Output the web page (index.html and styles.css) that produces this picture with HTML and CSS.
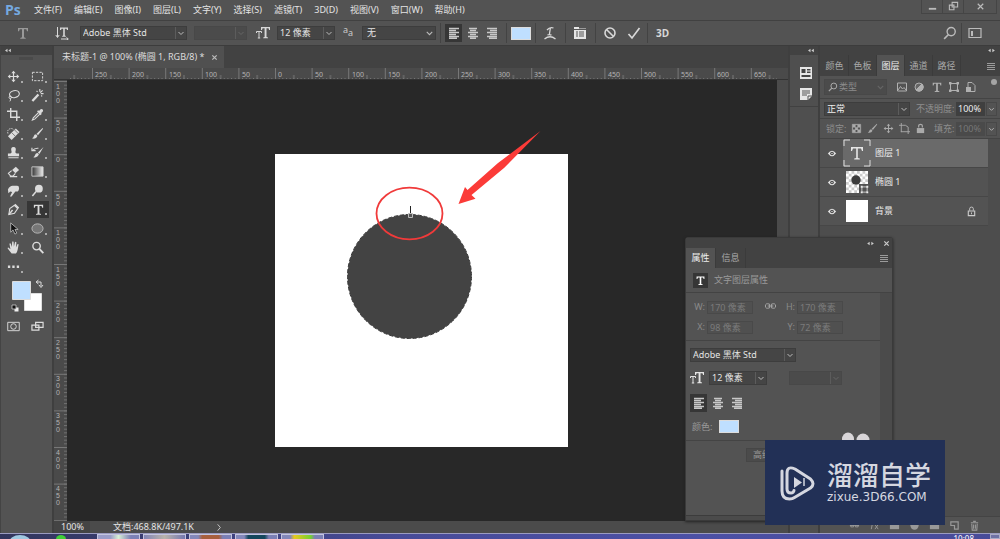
FILE: index.html
```html
<!DOCTYPE html>
<html lang="zh-CN">
<head>
<meta charset="utf-8">
<title>未标题-1</title>
<link rel="stylesheet" href="styles.css">
</head>
<body>
<svg class="sprite" aria-hidden="true">
  <symbol id="chev" viewBox="0 0 10 10"><path d="M2.5 4 5 6.5 7.5 4" fill="none" stroke="currentColor"/></symbol>
  <symbol id="al" viewBox="0 0 12 12"><path d="M1 1.5h10M1 3.5h7M1 5.5h10M1 7.5h7M1 9.5h10M1 11.3h8" stroke="currentColor" stroke-width="1.4"/></symbol>
  <symbol id="ac" viewBox="0 0 12 12"><path d="M2 1.5h8M3 3.5h6M1 5.5h10M3 7.5h6M1 9.5h10M3 11.3h6" stroke="currentColor" stroke-width="1.4"/></symbol>
  <symbol id="ar" viewBox="0 0 12 12"><path d="M1 1.5h10M4 3.5h7M1 5.5h10M4 7.5h7M1 9.5h10M3 11.3h8" stroke="currentColor" stroke-width="1.4"/></symbol>
  <symbol id="T" viewBox="0 0 14 14"><path d="M2 2h10v3.2h-1L10.3 3.300H8v8l1.700.6v.8H4.300v-.8L6 11.300v-8H3.700L3 5.200H2z" fill="currentColor"/></symbol>
  <symbol id="tT" viewBox="0 0 14 14"><path d="M5 1h9v3h-.9l-.6-1.700h-2V11l1.500.5v.7H7.200v-.7L8.600 11V2.300h-2L6 4H5z" fill="currentColor"/><path d="M.5 7V5.500h5V7M3 5.500V12M1.800 12h2.400" fill="none" stroke="currentColor"/></symbol>
  <symbol id="search" viewBox="0 0 12 12"><circle cx="7" cy="4.800" r="3.500" fill="none" stroke="currentColor" stroke-width="1.200"/><path d="M4.500 7.500 1 11" stroke="currentColor" stroke-width="1.400"/></symbol>
  <symbol id="eye" viewBox="0 0 12 10"><path d="M1 5q5-6.500 10 0-5 6.500-10 0z" fill="#e2e2e2"/><circle cx="6" cy="5" r="2.200" fill="#444"/><circle cx="6" cy="5" r=".9" fill="#ddd"/></symbol>
  <symbol id="move" viewBox="0 0 14 14"><path d="M7 2v10M2 7h10" stroke="currentColor" stroke-width="1.300"/><path d="m7 .8 2.300 2.700H4.700zM7 13.200l2.300-2.700H4.700zM.8 7l2.700-2.300v4.600zM13.200 7l-2.700-2.300v4.600z" fill="currentColor"/></symbol>
  <symbol id="brush" viewBox="0 0 14 14"><path d="M12.500 1 6 7.200l1.500 1.600L13 2z" fill="currentColor"/><path d="M5.500 7.800q-2.200 0-2.500 2.200-.3 1.700-2 2.200 4.500 1.300 6-2.400z" fill="currentColor"/></symbol>
  <symbol id="frame" viewBox="0 0 12 12"><path d="M2.500 2.500h7v7h-7z" fill="none" stroke="currentColor"/><path d="M1 1h2.500v2.500H1zM8.500 1H11v2.500H8.500zM1 8.500h2.500V11H1zM8.500 8.500H11V11H8.500z" fill="currentColor"/></symbol>
  <symbol id="lock" viewBox="0 0 12 12"><path d="M2.500 5.500h7v5h-7z" fill="none" stroke="currentColor" stroke-width="1.200"/><path d="M4 5V3q0-1.800 2-1.800T8 3v2M6 7v2" fill="none" stroke="currentColor"/></symbol>
  <symbol id="menu" viewBox="0 0 10 10"><path d="M1 2.500h8M1 4.500h8M1 6.500h8M1 8.500h8" stroke="currentColor" stroke-opacity=".85"/></symbol>
  <symbol id="left2" viewBox="0 0 10 6"><path d="M5 1 2 3l3 2zM9 1 6 3l3 2z" fill="currentColor"/></symbol>
  <symbol id="right2" viewBox="0 0 10 6"><path d="M1 3l3-2v4zM9 3 6 1v4z" fill="currentColor"/></symbol>
  <symbol id="x" viewBox="0 0 8 8"><path d="m1.500 1.500 5 5m0-5-5 5" stroke="currentColor" stroke-width="1.400"/></symbol>
</svg>

<header class="menubar">
  <span class="logo">Ps</span>
  <nav class="menus" aria-label="主菜单">
    <button>文件(F)</button><button>编辑(E)</button><button>图像(I)</button><button>图层(L)</button><button>文字(Y)</button><button>选择(S)</button><button>滤镜(T)</button><button>3D(D)</button><button>视图(V)</button><button>窗口(W)</button><button>帮助(H)</button>
  </nav>
  <div class="winbtns">
    <button aria-label="最小化"><svg viewBox="0 0 12 12"><path d="M2 8.500h8" stroke="currentColor" stroke-width="2"/></svg></button>
    <button aria-label="还原"><svg viewBox="0 0 12 12"><path d="M4.500 1.500h6v5h-6zM1.500 4.500h5v5h-5z" fill="none" stroke="currentColor" stroke-width="1.200"/></svg></button>
    <button class="close" aria-label="关闭"><svg viewBox="0 0 12 12"><path d="m3 3 6 6m0-6L3 9" stroke="currentColor" stroke-width="1.300"/></svg></button>
  </div>
</header>

<div class="options">
  <span class="opt-tool"><svg class="i14 dim"><use href="#T"/></svg></span>
  <button class="orient" aria-label="切换文本取向"><svg class="i14" viewBox="0 0 14 14"><path d="M2.500 1v10M.8 9l1.700 2.500L4.200 9M6 13h7M11.500 11.500 13.300 13l-1.800 1.300" fill="none" stroke="currentColor"/><path d="M5 1.500h8V4h-1l-.5-1.200H9.800v6.700l1 .5v.7H7.200V10l1-.5V2.800H6.500L6 4H5z" fill="currentColor"/></svg></button>
  <span class="sel w107"><select aria-label="字体"><option>Adobe 黑体 Std</option></select><svg><use href="#chev"/></svg></span>
  <span class="sel off w53"><select aria-label="字体样式" disabled><option></option></select><svg><use href="#chev"/></svg></span>
  <svg class="i14"><use href="#tT"/></svg>
  <span class="sel w58"><select aria-label="字体大小"><option>12 像素</option></select><svg><use href="#chev"/></svg></span>
  <svg class="aa" viewBox="0 0 19 14" role="img" aria-label="消除锯齿"><text x="0" y="7">a</text><text x="5" y="10">a</text></svg>
  <span class="sel w74 plain"><select aria-label="消除锯齿方法"><option>无</option></select><svg><use href="#chev"/></svg></span>
  <span class="bar"></span>
  <span class="aligns">
    <button class="on" aria-label="左对齐"><svg><use href="#al"/></svg></button><button aria-label="居中"><svg><use href="#ac"/></svg></button><button aria-label="右对齐"><svg><use href="#ar"/></svg></button>
  </span>
  <span class="bar"></span>
  <button class="swatch" aria-label="文本颜色"></button>
  <span class="bar"></span>
  <button aria-label="变形文字"><svg class="i14" viewBox="0 0 14 14"><path d="M4 4q3-3.500 6.500-2M7.300 2.500 6.300 9M4.500 8.900q2-.6 4 .3M1.500 13q5.500-4.500 11 0" fill="none" stroke="currentColor" stroke-width="1.300"/></svg></button>
  <span class="bar"></span>
  <button aria-label="切换面板"><svg class="i14" viewBox="0 0 14 14"><path d="M1 1h5v1.500h7V13H1z" fill="#e6e6e6"/><path d="M3 6h2m1 0h5M3 8h2m1 0h5M3 10h2m1 0h5M1 3.500h12" stroke="#555"/></svg></button>
  <span class="bar"></span>
  <button aria-label="取消"><svg class="i14" viewBox="0 0 14 14"><circle cx="7" cy="7" r="5" fill="none" stroke="currentColor" stroke-width="1.600"/><path d="m3.500 3.500 7 7" stroke="currentColor" stroke-width="1.600"/></svg></button>
  <button class="ok" aria-label="提交"><svg class="i14" viewBox="0 0 14 14"><path d="m1.500 8 3.500 4 7.500-10" fill="none" stroke="currentColor" stroke-width="1.700"/></svg></button>
  <span class="bar"></span>
  <button class="threed">3D</button>
  <span class="grow"></span>
  <button aria-label="搜索"><svg class="i14 soft"><use href="#search"/></svg></button>
  <span class="bar"></span>
  <button class="ws" aria-label="工作区"><svg class="i14 soft" viewBox="0 0 14 14"><path d="M1 2.500h12v9H1z" fill="none" stroke="currentColor" stroke-width="1.200"/><path d="M3 5h2v5H3z" fill="currentColor"/></svg></button>
</div>

<main class="workspace">
  <aside class="toolbar">
    <div class="strip"><svg><use href="#left2"/></svg></div>
    <div class="grip"></div>
    <div class="tools">
      <button aria-label="移动"><svg><use href="#move"/></svg></button>
      <button aria-label="选框"><svg viewBox="0 0 14 14"><path d="M1.500 2.500h11v9h-11z" fill="none" stroke="currentColor" stroke-dasharray="2.500 1.300"/></svg></button>
      <button aria-label="套索"><svg viewBox="0 0 14 14"><ellipse cx="8" cy="5.500" rx="5.300" ry="3.700" transform="rotate(-12 8 5.500)" fill="none" stroke="currentColor" stroke-width="1.200"/><circle cx="3.500" cy="9" r="1.300" fill="none" stroke="currentColor"/><path d="M3.500 10.300q1 1.500-.5 3" fill="none" stroke="currentColor"/></svg></button>
      <button aria-label="魔棒"><svg viewBox="0 0 14 14"><path d="m1.500 13 6.500-7" stroke="currentColor" stroke-width="2.500"/><path d="M9.500 0v3M13.500 5h-3M6 2l1 1M12.500 1.500 10 4M12 8l-1-1" stroke="currentColor" stroke-width="1.200"/></svg></button>
      <button aria-label="裁剪"><svg viewBox="0 0 14 14"><path d="M4 0v10h10M0 3.500h10.500V14" fill="none" stroke="currentColor" stroke-width="1.500"/></svg></button>
      <button aria-label="吸管"><svg viewBox="0 0 14 14"><path d="m8 5-5.500 5.500-1 2.500 2.500-1L9.500 6.500" fill="none" stroke="currentColor" stroke-width="1.200"/><path d="m6.500 3.500 1.200-1 1 .7Q10 .8 11.500 1q2 .5 1.500 2.200-.4 1.200-2 2.300l.5 1-1.200 1.200z" fill="currentColor"/></svg></button>
      <button aria-label="修复"><svg viewBox="0 0 14 14"><path d="M1 10 9.500 1.500l4 4L5 14z" fill="currentColor"/><path d="m5 6 4 4M8 3l4 4" stroke="#777"/><path d="M1 7Q0 3 3 2t4 1" fill="none" stroke="currentColor" stroke-dasharray="1.500 1"/></svg></button>
      <button aria-label="画笔"><svg><use href="#brush"/></svg></button>
      <button aria-label="图章"><svg viewBox="0 0 14 14"><path d="M5 6.500Q3.300 1 7 1t2 5.500q0 1.500 1.500 1.500H13v3H1V8h2.500Q5 8 5 6.500zM1.500 12h11v1.300h-11z" fill="currentColor"/></svg></button>
      <button aria-label="历史画笔"><svg viewBox="0 0 14 14"><path d="M13.500 1 7.500 7l1.500 1.500zM7 7.500q-2 0-2.500 2t-2 2.500q4.500 1.200 6-3z" fill="currentColor"/><path d="M1 2v3h4M1.500 5Q4 2 8 2.500" fill="none" stroke="currentColor" stroke-width="1.200"/></svg></button>
      <button aria-label="橡皮擦"><svg viewBox="0 0 14 14"><path d="m5.500 5.500 4-3.500 3.500 3.500-4 3.500z" fill="currentColor"/><path d="m5 6-3.500 3 2.500 3h2.500L9 9M3 12.500h8" fill="none" stroke="currentColor" stroke-width="1.200"/></svg></button>
      <button aria-label="渐变"><svg viewBox="0 0 14 14"><defs><linearGradient id="g"><stop stop-color="#333"/><stop offset="1" stop-color="#eee"/></linearGradient></defs><path d="M1 2h12v10H1z" fill="url(#g)" stroke="#ccc"/></svg></button>
      <button aria-label="涂抹"><svg viewBox="0 0 14 14"><path d="M1 6q2-4 5-4h5q2 0 2 2.500T11.500 8H9L5 13.500H3.200L5.500 8.500 3.500 8 1.500 10z" fill="currentColor"/></svg></button>
      <button aria-label="减淡"><svg viewBox="0 0 14 14"><circle cx="8.500" cy="5" r="4.200" fill="currentColor"/><path d="M5.500 8 1.500 13" stroke="currentColor" stroke-width="1.600"/></svg></button>
      <button aria-label="钢笔"><svg viewBox="0 0 14 14"><path d="m2 12.500 1-6.500 5-3.500 3.500 3.500L8 11z" fill="none" stroke="currentColor" stroke-width="1.200"/><path d="m8.500 1.500 4 4M2 12.500l4-5" stroke="currentColor" stroke-width="1.600"/></svg></button>
      <button class="on" aria-label="文字"><svg><use href="#T"/></svg></button>
      <button aria-label="选择"><svg viewBox="0 0 14 14"><path d="M4 1v10l2.500-2.500L8.500 13l2-1-2-4H12z" fill="#111" stroke="#ccc" stroke-width=".8"/></svg></button>
      <button aria-label="椭圆"><svg viewBox="0 0 14 14"><ellipse cx="7" cy="7" rx="6" ry="5" fill="#777" stroke="#bbb"/></svg></button>
      <button aria-label="抓手"><svg viewBox="0 0 14 14"><path d="M5 13.500Q3 11 .8 8q-.5-1.200 1-.8L3.700 9 2.600 3q.8-1.200 1.500 0l1 3.500L5.600 1q.8-1.200 1.500 0l.3 5.300L8.600 1.300q1-1 1.500.2L9.600 7l1.600-3.500q1-.8 1.300.3L11.600 9q-.5 3-2 4.500z" fill="currentColor"/></svg></button>
      <button class="last" aria-label="缩放"><svg viewBox="0 0 14 14"><circle cx="6" cy="5.500" r="4" fill="none" stroke="currentColor" stroke-width="1.500"/><path d="m9 8.500 4.300 4.500" stroke="currentColor" stroke-width="2"/></svg></button>
      <button aria-label="更多"><svg viewBox="0 0 14 14"><path d="M1 6h2.500v2.500H1zM5.700 6h2.500v2.500H5.700zM10.500 6H13v2.500h-2.500z" fill="currentColor"/></svg></button>
    </div>
    <svg class="colors" viewBox="0 0 52 38" role="img" aria-label="前景色和背景色"><path d="M23.500 14.500h17v17h-17z" fill="#fff" stroke="#ddd"/><path d="M11.500 2.500h18v18h-18z" fill="#bfdfff" stroke="#ddd"/><path d="M36 3h4v4M37.500 1 35 3l2.500 2M38 6l2 2.500L42 6" fill="none" stroke="#ddd"/><path d="M13.500 28.500h4v4h-4z" fill="#eee"/><path d="M11 26h4v4h-4z" fill="#111" stroke="#ccc" stroke-width=".8"/></svg>
    <div class="modes">
      <button aria-label="快速蒙版"><svg viewBox="0 0 14 14"><path d="M.8 2.500h12.400v9H.8z" fill="none" stroke="currentColor"/><circle cx="7" cy="7" r="3" fill="none" stroke="currentColor"/></svg></button>
      <button aria-label="屏幕模式"><svg viewBox="0 0 14 14"><path d="M5 2.500h8v5.500H5zM1 5.500h7.500V11H1z" fill="#535353" stroke="currentColor" stroke-width="1.300"/></svg></button>
    </div>
  </aside>

  <section class="document">
    <div class="doctabs"><span class="doctab">未标题-1 @ 100% (椭圆 1, RGB/8) * <button aria-label="关闭文档"><svg><use href="#x"/></svg></button></span></div>
    <div class="hruler">
      <svg width="734" height="12">
        <defs>
          <pattern id="hm" x="38" width="3.660" height="12" patternUnits="userSpaceOnUse"><path d="M.5 10v2" stroke="#777"/></pattern>
          <pattern id="hM" x="38" width="36.600" height="12" patternUnits="userSpaceOnUse"><path d="M.5 0v12M18.800 7v5" stroke="#777"/></pattern>
        </defs>
        <rect x="14" width="709" height="12" fill="url(#hm)"/><rect x="14" width="709" height="12" fill="url(#hM)"/>
        <g class="rt"><text x="41" y="9">250</text><text x="78" y="9">200</text><text x="115" y="9">150</text><text x="151" y="9">100</text><text x="188" y="9">50</text><text x="224" y="9">0</text><text x="261" y="9">50</text><text x="298" y="9">100</text><text x="334" y="9">150</text><text x="371" y="9">200</text><text x="407" y="9">250</text><text x="444" y="9">300</text><text x="480" y="9">350</text><text x="517" y="9">400</text><text x="554" y="9">450</text><text x="590" y="9">500</text><text x="627" y="9">550</text><text x="663" y="9">600</text><text x="700" y="9">650</text></g>
      </svg>
    </div>
    <div class="view">
      <div class="vruler">
        <svg width="13" height="441">
          <defs>
            <pattern id="vm" y="1" width="13" height="3.660" patternUnits="userSpaceOnUse"><path d="M10 .5h3" stroke="#707070"/></pattern>
            <pattern id="vM" y="1" width="13" height="36.600" patternUnits="userSpaceOnUse"><path d="M0 .5h13" stroke="#777"/></pattern>
          </defs>
          <rect width="13" height="441" fill="url(#vm)"/><rect width="13" height="441" fill="url(#vM)"/>
          <g class="rt">
            <text y="9"><tspan x="2">1</tspan><tspan x="2" dy="7">0</tspan><tspan x="2" dy="7">0</tspan></text>
            <text y="45"><tspan x="2">5</tspan><tspan x="2" dy="7">0</tspan></text>
            <text y="82"><tspan x="2">0</tspan></text>
            <text y="119"><tspan x="2">5</tspan><tspan x="2" dy="7">0</tspan></text>
            <text y="155"><tspan x="2">1</tspan><tspan x="2" dy="7">0</tspan><tspan x="2" dy="7">0</tspan></text>
            <text y="192"><tspan x="2">1</tspan><tspan x="2" dy="7">5</tspan><tspan x="2" dy="7">0</tspan></text>
            <text y="228"><tspan x="2">2</tspan><tspan x="2" dy="7">0</tspan><tspan x="2" dy="7">0</tspan></text>
            <text y="265"><tspan x="2">2</tspan><tspan x="2" dy="7">5</tspan><tspan x="2" dy="7">0</tspan></text>
            <text y="301"><tspan x="2">3</tspan><tspan x="2" dy="7">0</tspan><tspan x="2" dy="7">0</tspan></text>
            <text y="338"><tspan x="2">3</tspan><tspan x="2" dy="7">5</tspan><tspan x="2" dy="7">0</tspan></text>
            <text y="375"><tspan x="2">4</tspan><tspan x="2" dy="7">0</tspan><tspan x="2" dy="7">0</tspan></text>
            <text y="411"><tspan x="2">4</tspan><tspan x="2" dy="7">5</tspan><tspan x="2" dy="7">0</tspan></text>
          </g>
        </svg>
      </div>
      <div class="canvas">
        <svg width="710" height="441" role="img" aria-label="画布">
          <path d="M208 74h293v293H208z" fill="#fff"/>
          <circle cx="342.500" cy="196.500" r="62" fill="#434343"/>
          <circle cx="342.500" cy="196.500" r="62" fill="none" stroke="#3a3a3a" stroke-dasharray="4 2"/>
          <path d="M343.500 126v8" stroke="#222"/><path d="M341.500 133.500h4v4h-4z" fill="#555" stroke="#bbb"/>
          <ellipse cx="342.500" cy="133.500" rx="33" ry="25.800" fill="none" stroke="#f03a3a" stroke-width="1.800"/>
          <path d="M473.500 51 431 83 400.500 110 398 107 391.500 124 408.500 118.800 404.500 115 437 88Z" fill="#fb3b38"/>
        </svg>
      </div>
      <div class="vscroll"></div>
    </div>
    <div class="status"><span class="zoom">100%</span><span class="info">文档:468.8K/497.1K</span><button aria-label="状态菜单"><svg viewBox="0 0 8 10"><path d="m2.500 1.500 3 3.500-3 3.500" fill="none" stroke="currentColor"/></svg></button></div>
  </section>

  <aside class="dock">
    <div class="strip"><svg><use href="#left2"/></svg></div>
    <div class="dockicons">
      <button aria-label="库"><svg viewBox="0 0 12 14"><path d="M0 1h12v12H0z" fill="#e6e6e6"/><path d="M1.500 3h4v4h-4zM7 3h3.500v1.500H7zM7 5.500h3.500V7H7zM1.500 9h9v2h-9z" fill="#444"/></svg></button>
      <button aria-label="注释"><svg viewBox="0 0 12 14"><path d="M0 1h12v8l-4 4H0z" fill="#e6e6e6"/><path d="M2 4h8M2 6h8M2 8h5M8 13V9h4" fill="none" stroke="#555"/></svg></button>
    </div>
  </aside>

  <aside class="panels">
    <div class="strip"><svg><use href="#right2"/></svg></div>
    <div class="tabs"><button>颜色</button><button>色板</button><button class="on">图层</button><button>通道</button><button>路径</button><span class="grow"></span><svg class="i10"><use href="#menu"/></svg></div>
    <div class="filter">
      <span class="sel off kind"><svg class="mag"><use href="#search"/></svg><select aria-label="过滤类型"><option>类型</option></select><svg><use href="#chev"/></svg></span>
      <div class="ficons">
        <svg viewBox="0 0 12 12"><path d="M1.500 2h9v8h-9zM2 9l2.500-3.500L6.500 8 8 6.500 10 9" fill="none" stroke="currentColor"/></svg>
        <svg viewBox="0 0 12 12"><circle cx="6" cy="6" r="4" fill="#666" stroke="currentColor"/><path d="M9 3a4 4 0 0 1-6 6z" fill="currentColor" stroke="currentColor"/></svg>
        <svg><use href="#T"/></svg>
        <svg><use href="#frame"/></svg>
        <svg viewBox="0 0 12 12"><path d="M3 1.500h4l3 3v6H3z" fill="none" stroke="currentColor"/><path d="M1 6h5v5H1z" fill="currentColor"/></svg>
      </div>
      <svg class="dot" viewBox="0 0 6 12"><circle cx="3" cy="3" r="3" fill="#a5a5a5"/></svg>
    </div>
    <div class="blend">
      <span class="sel mode"><select aria-label="混合模式"><option>正常</option></select><svg><use href="#chev"/></svg></span>
      <label for="op">不透明度:</label><input id="op" value="100%"><button class="step" aria-label="不透明度选项"><svg><use href="#chev"/></svg></button>
    </div>
    <div class="blend locks">
      <span class="lk">锁定:</span>
      <svg viewBox="0 0 12 12"><path d="M1.500 1.500h9v9h-9z" fill="none" stroke="currentColor"/><path d="M2 2h3v3H2zM7 2h3v3H7zM4.500 4.500h3v3h-3zM2 7h3v3H2zM7 7h3v3H7z" fill="currentColor"/></svg>
      <svg><use href="#brush"/></svg><svg><use href="#move"/></svg>
      <svg viewBox="0 0 12 12"><path d="M2.500 0v10M0 2.500h7l3 2V12M2 9.500h10" fill="none" stroke="currentColor"/></svg>
      <svg viewBox="0 0 12 12"><path d="M2 5.500h8v5.500H2z" fill="currentColor"/><path d="M4 5V3q0-1.500 2-1.500T8 3v2" fill="none" stroke="currentColor" stroke-width="1.300"/></svg>
      <label for="fl">填充:</label><input id="fl" class="faint" value="100%" disabled><button class="step" aria-label="填充选项"><svg><use href="#chev"/></svg></button>
    </div>
    <div class="layers">
      <ul>
        <li class="on"><button aria-label="可见性"><svg><use href="#eye"/></svg></button><span class="lbody"><svg class="thumb" viewBox="0 0 28 28"><path d="M1 7V1h6M21 1h6v6M27 21v6h-6M7 27H1v-6" fill="none" stroke="#ddd"/><path d="M8 8h12v4h-1l-1-2.500h-3.200V19l2 .6v1h-5.600v-1l2-.6V9.500H10L9 12H8z" fill="#e6e6e6"/></svg>图层 1</span></li>
        <li><button aria-label="可见性"><svg><use href="#eye"/></svg></button><span class="lbody"><svg class="thumb" viewBox="0 0 28 28"><defs><pattern id="ck" x="3" y="3" width="5.500" height="5.500" patternUnits="userSpaceOnUse"><path d="M0 0h5.500v5.500H0z" fill="#fff"/><path d="M0 0h2.750v2.750H0zM2.750 2.750H5.500V5.500H2.750z" fill="#ccc"/></pattern></defs><path d="M3 3h22v22H3z" fill="url(#ck)"/><circle cx="13" cy="12" r="4.700" fill="#3c3c3c"/><path d="M16 16h11v11H16z" fill="#535353"/><svg x="17" y="17" width="9" height="9"><use href="#frame"/></svg></svg>椭圆 1</span></li>
        <li><button aria-label="可见性"><svg><use href="#eye"/></svg></button><span class="lbody"><svg class="thumb" viewBox="0 0 28 28"><path d="M3 3h22v22H3z" fill="#fff"/></svg>背景<svg class="lck"><use href="#lock"/></svg></span></li>
      </ul>
    </div>
    <div class="lfoot">
      <svg viewBox="0 0 12 12"><path d="M1 6h10M2 4.500h3v3H2zM7 4.500h3v3H7z" fill="none" stroke="currentColor"/></svg>
      <svg viewBox="0 0 12 12"><path d="M6 2Q4 1 3.500 5L2.500 10M2 5h3.500M6.500 5l3.500 5M10 5l-3.500 5" fill="none" stroke="currentColor"/></svg>
      <svg viewBox="0 0 12 12"><path d="M1 2h10v8H1z" fill="currentColor"/></svg>
      <svg viewBox="0 0 12 12"><circle cx="6" cy="6" r="4.500" fill="currentColor"/></svg>
      <svg viewBox="0 0 12 12"><path d="M1 2h10v8H1z" fill="currentColor"/></svg>
      <svg viewBox="0 0 12 12"><path d="M2 2h8v8H6V6H2z" fill="none" stroke="currentColor" stroke-width="1.300"/></svg>
      <svg viewBox="0 0 12 12"><path d="M2 3h8M4.500 1.500h3M3 4l.5 7h5L9 4M5 5v4.500M7 5v4.500" fill="none" stroke="currentColor" stroke-width="1.200"/></svg>
    </div>
  </aside>

  <section class="props">
    <div class="phead"><svg><use href="#right2"/></svg><button aria-label="关闭面板"><svg><use href="#x"/></svg></button></div>
    <div class="tabs"><button class="on">属性</button><button>信息</button><span class="grow"></span><svg class="i10"><use href="#menu"/></svg></div>
    <div class="ptitle"><span class="badge"><svg><use href="#T"/></svg></span>文字图层属性</div>
    <div class="pbody">
      <div class="dims">
        <label for="w">W:</label><input id="w" value="170 像素" disabled><svg viewBox="0 0 14 10"><path d="M6 3q-4.500-1.500-4.500 2T6 7M8 3q4.500-1.500 4.500 2T8 7M4 5h6M6 3v4M8 3v4" fill="none" stroke="#aaa"/></svg><label for="h">H:</label><input id="h" value="170 像素" disabled>
        <label for="px">X:</label><input id="px" value="98 像素" disabled><span></span><label for="py">Y:</label><input id="py" value="72 像素" disabled>
      </div>
      <div class="type">
        <span class="sel pfont"><select aria-label="属性字体"><option>Adobe 黑体 Std</option></select><svg><use href="#chev"/></svg></span>
        <div class="prow"><svg class="i14"><use href="#tT"/></svg><span class="sel psize"><select aria-label="属性字号"><option>12 像素</option></select><svg><use href="#chev"/></svg></span><span class="sel off w53"><select aria-label="行距" disabled><option></option></select><svg><use href="#chev"/></svg></span></div>
        <span class="aligns"><button class="on" aria-label="左"><svg><use href="#al"/></svg></button><button aria-label="中"><svg><use href="#ac"/></svg></button><button aria-label="右"><svg><use href="#ar"/></svg></button></span>
        <div class="pcolor">颜色: <button class="swatch" aria-label="颜色"></button></div>
      </div>
      <button class="adv">高级</button>
    </div>
    <div class="pfoot"></div>
  </section>

  <div class="mark">
    <svg class="ears" viewBox="0 0 30 8"><ellipse cx="8" cy="7" rx="6" ry="6.500" fill="#d9d6d9"/><ellipse cx="23" cy="8" rx="6.500" ry="6.500" fill="#d9d6d9"/></svg>
    <svg class="play" viewBox="0 0 36 36"><path d="M2 6v20q0 8 7.500 8 3 0 5-1.500l16-9.500q5-4 0-9L15 4Q7 .5 7 8v16q0 4 4 4 2.500 0 3-2.500" fill="none" stroke="#d5d7e0" stroke-width="3" stroke-linecap="round" stroke-linejoin="round"/><path d="m14 12 8 5.500-8 5.500z" fill="#d5d7e0"/><path d="M24 13v8" stroke="#d5d7e0" stroke-width="1.500"/></svg>
    <div><div class="cn">溜溜自学</div><div class="url">zixue.3D66.COM</div></div>
  </div>
</main>

<footer class="taskbar">
  <svg class="orb" viewBox="0 0 22 5"><ellipse cx="11" cy="9" rx="11" ry="8" fill="#9fc8e0"/></svg>
  <svg class="green" viewBox="0 0 12 5"><ellipse cx="6" cy="5" rx="5" ry="4" fill="#40d038"/></svg>
  <span class="task t1"></span><span class="task t2"></span><span class="task t3"></span><span class="task t4"></span><span class="task t5"></span>
  <span class="grow"></span><span class="clock">10:08</span><span class="desk"></span>
</footer>
</body>
</html>
```

FILE: styles.css
```css
* { box-sizing: border-box; }
body {
  margin: 0; min-height: 100vh; display: flex; flex-direction: column; overflow: hidden;
  background: #535353; color: #e4e4e4;
  font: 9px/12px "Noto Sans", "Noto Sans CJK SC", sans-serif;
}
button, input, select { font: inherit; color: inherit; background: none; border: 0; padding: 0; margin: 0; }
button { display: flex; align-items: center; justify-content: center; }
input { min-width: 0; }
svg { display: block; flex: none; }
ul { list-style: none; margin: 0; padding: 0; }
.sprite { position: absolute; width: 0; height: 0; }
.grow { flex: 1; }
.i14 { width: 14px; height: 14px; }
.i10 { width: 10px; height: 10px; color: #aaa; }
.dim { color: #999; }
.soft { color: #bbb; }

.menubar { display: flex; height: 20px; align-items: center; }
.logo { width: 34px; padding-left: 5px; color: #75a9e0; font: bold 14px/20px "Open Sans", sans-serif; }
.menus { display: flex; flex: 1; gap: 12px; }
.winbtns { display: flex; align-self: flex-start; margin-right: 3px; border: 1px solid #454545; border-top: 0; color: #bbb; }
.winbtns button { width: 21px; height: 13px; border-right: 1px solid #454545; }
.winbtns .close { width: 32px; border: 0; }
.winbtns svg { width: 11px; height: 11px; }

.options { display: flex; height: 26px; align-items: center; border-top: 1px solid #414141; border-bottom: 1px solid #3c3c3c; color: #d8d8d8; }
.opt-tool { width: 41px; padding-left: 16px; margin-right: 14px; }
.orient { margin-right: 11px; }
.sel { display: grid; height: 14px; background: #454545; border: 1px solid #3d3d3d; color: #e4e4e4; }
.sel > * { grid-area: 1 / 1; }
.sel select { appearance: none; width: 100%; padding: 0 12px 0 2px; line-height: 12px; outline: 0; opacity: 1; }
.sel > svg:last-child { width: 11px; height: 12px; justify-self: end; border-left: 1px solid #5c5c5c; color: #bbb; pointer-events: none; }
.sel.plain > svg:last-child { border: 0; }
.sel.plain select { padding-left: 4px; }
.sel.off { background: #4b4b4b; border-color: #484848; color: #8c8c8c; }
.sel.off > svg:last-child { color: #666; }
.w107 { width: 107px; margin-right: 7px; }
.w53 { width: 53px; margin-right: 9px; }
.w58 { width: 58px; margin: 0 8px 0 7px; }
.w74 { width: 74px; }
.aa { width: 19px; height: 14px; fill: #ccc; font-size: 9px; }
.bar { width: 1px; height: 20px; margin: 0 4px; background: #434343; }
.aligns { display: flex; gap: 2px; color: #c8c8c8; }
.aligns button { width: 17px; height: 18px; }
.aligns .on { background: #363636; }
.aligns svg { width: 12px; height: 12px; }
.options .aligns { margin-right: 2px; }
.swatch { width: 20px; height: 13px; background: #bfdfff; border: 1px solid #ddd; }
.options > .bar + button { margin: 0 4px 0 3px; }
.options > .bar + .swatch { margin: 0; }
.options .ok { margin: 0 2px 0 6px; }
.options > .bar + .threed { margin-left: 4px; font: bold 10px/14px "Open Sans", sans-serif; }
.options > .bar + .ws { margin: 0 18px 0 2px; }

.workspace { position: relative; flex: 1; display: flex; min-height: 0; background: #3f3f3f; }
.strip { height: 9px; display: flex; align-items: center; background: #424242; color: #ccc; }
.strip svg { width: 9px; height: 5px; }
.toolbar { width: 52px; margin-right: 2px; background: #535353; border-left: 1px solid #444; }
.toolbar .strip { padding-left: 2px; }
.grip { width: 14px; height: 3px; margin: 2px 0 7px 18px; background: #4a4a4a; }
.tools { display: grid; grid-template-columns: 24px 24px; grid-auto-rows: 19px; }
.tools button, .modes button { position: relative; color: #dcdcdc; }
.tools svg, .modes svg { width: 13px; height: 13px; }
.tools button::after { content: ""; position: absolute; right: 2px; bottom: 3px; width: 2px; height: 2px; background: #aaa; }
.tools .last::after { content: none; }
.tools .on { background: #363636; margin: 1px 0 1px 2px; }
.colors { width: 52px; height: 38px; margin: 3px 0; }
.modes { display: grid; grid-template-columns: 24px 24px; }

.document { flex: 1; min-width: 0; display: flex; flex-direction: column; }
.doctabs { height: 22px; background: #424242; display: flex; }
.doctab { display: flex; align-items: center; gap: 4px; padding: 0 6px 0 8px; background: #505050; color: #ddd; white-space: pre; }
.doctab svg { width: 7px; height: 7px; color: #bbb; }
.hruler { height: 12px; overflow: hidden; background: #4a4a4a; border-bottom: 1px solid #333; }
.rt { fill: #b4b4b4; font-size: 7px; }
.view { flex: 1; min-height: 0; display: flex; }
.vruler { width: 13px; overflow: hidden; background: #4a4a4a; }
.vruler .rt { font-family: "Liberation Sans", sans-serif; }
.canvas { flex: 1; min-width: 0; overflow: hidden; background: #282828; }
.vscroll { width: 11px; background: #4b4b4b; }
.status { height: 12px; display: flex; align-items: center; background: #4b4b4b; }
.status .zoom { width: 36px; height: 12px; padding-left: 7px; background: #444; }
.status .info { width: 119px; padding-left: 23px; }
.status button { width: 20px; color: #ccc; }
.status svg { width: 8px; height: 9px; }

.dock { width: 28px; margin: 0 2px; background: #4f4f4f; }
.dock .strip { justify-content: center; padding-left: 12px; }
.dockicons { display: flex; flex-direction: column; align-items: center; gap: 7px; padding: 11px 0 5px 3px; border-bottom: 1px solid #414141; }
.dockicons svg { width: 12px; height: 14px; }

.panels { width: 180px; display: flex; flex-direction: column; background: #4d4d4d; }
.panels .strip { justify-content: flex-end; padding-right: 4px; }
.tabs { display: flex; height: 21px; align-items: center; background: #424242; color: #aaa; padding-right: 4px; }
.tabs button { width: 28px; height: 21px; border-right: 1px solid #3b3b3b; }
.tabs .on { background: #535353; color: #eee; }
.panels .tabs { padding-left: 1px; }
.filter, .blend { display: flex; align-items: center; background: #535353; border-bottom: 1px solid #444; padding: 0 3px 0 4px; }
.filter { height: 23px; }
.kind { width: 63px; height: 16px; border-color: #5e5e5e; }
.kind select { padding-left: 14px; line-height: 14px; }
.kind .mag { width: 10px; height: 10px; margin: 2px 3px; color: #aaa; }
.kind > svg:last-child { border: 0; height: 14px; }
.ficons { display: flex; flex: 1; justify-content: space-between; padding: 0 14px 0 9px; color: #b0b0b0; }
.ficons svg { width: 12px; height: 12px; }
.dot { width: 6px; height: 12px; margin-bottom: 4px; }
.blend { height: 20px; color: #8e8e8e; }
.mode { width: 86px; color: #eee; margin-right: 6px; }
.blend label { margin-right: auto; white-space: nowrap; }
.blend input { width: 29px; height: 14px; padding-left: 2px; background: #3f3f3f; color: #eee; }
.blend input.faint { background: #4a4a4a; color: #777; }
.step { width: 11px; height: 14px; margin-left: 1px; border: 1px solid #484848; color: #bbb; }
.step svg { width: 9px; height: 10px; }
.locks .lk { width: 27px; padding-left: 2px; white-space: nowrap; }
.locks > svg { width: 11px; height: 11px; margin-right: 5px; color: #aaa; }
.locks > label { margin-left: 3px; }
.layers { flex: 1; padding-right: 12px; }
.layers ul { background: #535353; }
.layers li { display: flex; height: 29px; border-bottom: 1px solid #474747; }
.layers li > button { width: 23px; }
.layers li > button svg { width: 10px; height: 9px; }
.lbody { flex: 1; display: flex; align-items: center; gap: 4px; color: #ececec; }
.layers .on .lbody { background: #6a6a6a; }
.thumb { width: 28px; height: 28px; }
.lck { width: 11px; height: 11px; margin: 0 11px 0 auto; color: #ccc; }
.lfoot { display: flex; height: 17px; align-items: center; justify-content: flex-end; gap: 9px; padding-right: 20px; background: #535353; border-top: 1px solid #444; color: #999; }
.lfoot svg { width: 11px; height: 11px; }

.props { position: absolute; right: 107px; top: 191px; bottom: 12px; width: 208px; display: flex; flex-direction: column; background: #4b4b4b; border: 1px solid #3a3a3a; border-radius: 3px 3px 0 0; box-shadow: 0 1px 3px #222; }
.phead { height: 10px; display: flex; align-items: center; justify-content: flex-end; gap: 8px; padding-right: 2px; background: #424242; color: #ccc; }
.phead > svg { width: 9px; height: 5px; }
.phead button svg { width: 7px; height: 7px; }
.props .tabs { height: 20px; padding-right: 3px; }
.props .tabs button { height: 20px; width: 30px; }
.ptitle { display: flex; height: 25px; align-items: center; gap: 6px; padding-left: 7px; background: #535353; border-bottom: 1px solid #434343; color: #999; }
.badge { width: 15px; height: 15px; padding: 2px; background: #363636; color: #fff; }
.badge svg { width: 11px; height: 11px; }
.pbody { flex: 1; min-height: 0; margin-right: 12px; background: #535353; }
.dims { display: grid; grid-template-columns: 15px 46px 22px 16px 46px; grid-auto-rows: 14px; gap: 6px 2px; padding: 8px 0 6px 4px; height: 48px; border-bottom: 1px solid #444; color: #8a8a8a; }
.dims label { text-align: right; }
.dims input { height: 13px; padding-left: 2px; border: 1px solid #494949; background: #505050; color: #7b7b7b; }
.dims svg { width: 13px; height: 10px; justify-self: end; }
.type { padding: 7px 0 6px 4px; border-bottom: 1px solid #444; }
.pfont { width: 106px; margin-bottom: 9px; }
.prow { display: flex; align-items: center; margin-bottom: 9px; }
.psize { width: 58px; margin: 0 22px 0 5px; }
.type .aligns { margin-bottom: 7px; }
.pcolor { display: flex; align-items: center; gap: 7px; padding-left: 2px; height: 15px; color: #999; }
.adv { width: 70px; height: 14px; margin: 7px 0 0 60px; padding-left: 6px; justify-content: flex-start; background: #4b4b4b; border: 1px solid #464646; color: #999; }
.pfoot { height: 5px; border-top: 1px solid #3c3c3c; }

.mark { position: absolute; right: 55px; bottom: 8px; width: 180px; height: 85px; display: flex; align-items: center; gap: 11px; padding-left: 15px; background: #223056; color: #d5d7e0; }
.ears { position: absolute; left: 75px; top: -8px; width: 30px; height: 8px; }
.play { width: 36px; height: 36px; }
.cn { font: 500 26px/26px "Noto Sans CJK SC", sans-serif; margin-bottom: 3px; }
.url { font: 12px/14px "DejaVu Sans", sans-serif; }

.taskbar { display: flex; height: 6px; overflow: hidden; border-top: 1px solid #9b9bc0; background: linear-gradient(90deg, #32355c, #484b98 40%, #4c50a5 70%, #484b98); }
.orb { width: 22px; height: 5px; margin: 0 14px 0 9px; }
.green { width: 12px; height: 5px; margin: 0 30px 0 10px; }
.task { width: 43px; margin-right: 3px; border: 1px solid #c3c5df; border-bottom: 0; }
.t1 { background: linear-gradient(90deg, #9a9cc8 30%, #d8efd5 50%, #7d80b5 80%); }
.t2 { background: linear-gradient(90deg, #8284b5, #b9b3ac 50%, #7678b0); }
.t3 { background: linear-gradient(90deg, #8387ba 20%, #a75f3e 30% 70%, #7b7fb5 80%); }
.t4 { background: linear-gradient(90deg, #8387ba 20%, #14465c 30% 70%, #7b7fb5 80%); }
.t5 { background: linear-gradient(90deg, #8387ba 20%, #e8c81e 30%, #75d131 70%, #7b7fb5 80%); }
.clock { margin-right: 16px; font-size: 8px; line-height: 10px; color: #fff; }
.desk { width: 10px; border: 1px solid #a9aac6; background: #6f72a5; }
```
